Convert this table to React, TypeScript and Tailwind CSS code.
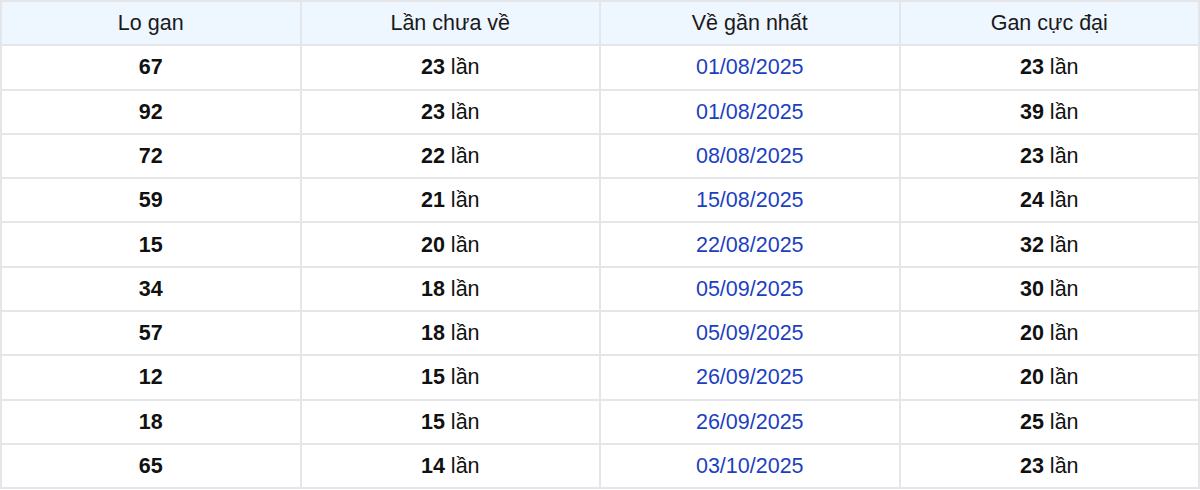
const rows: [string, number, string, number][] = [
  ['67', 23, '01/08/2025', 23],
  ['92', 23, '01/08/2025', 39],
  ['72', 22, '08/08/2025', 23],
  ['59', 21, '15/08/2025', 24],
  ['15', 20, '22/08/2025', 32],
  ['34', 18, '05/09/2025', 30],
  ['57', 18, '05/09/2025', 20],
  ['12', 15, '26/09/2025', 20],
  ['18', 15, '26/09/2025', 25],
  ['65', 14, '03/10/2025', 23],
];

const headers = ['Lo gan', 'Lần chưa về', 'Về gần nhất', 'Gan cực đại'];

const cell = 'h-[44.3px] w-1/4 border-2 border-[#e4e6ea] p-0 text-center align-middle';

export default function App() {
  return (
    <div className="h-[490px] w-[1200px] overflow-hidden bg-white font-['Liberation_Sans',Arial,sans-serif] text-[21.5px] text-[#111]">
      <table className="w-full table-fixed border-collapse">
        <thead>
          <tr className="bg-[#eef6ff]">
            {headers.map((h) => (
              <th key={h} className={`${cell} font-normal text-[#1a1a1a]`}>
                {h}
              </th>
            ))}
          </tr>
        </thead>
        <tbody>
          {rows.map(([lo, missed, last, max]) => (
            <tr key={lo}>
              <td className={`${cell} font-bold`}>{lo}</td>
              <td className={cell}>
                <b>{missed}</b> lần
              </td>
              <td className={`${cell} text-[#1c3fc0]`}>{last}</td>
              <td className={cell}>
                <b>{max}</b> lần
              </td>
            </tr>
          ))}
        </tbody>
      </table>
    </div>
  );
}
